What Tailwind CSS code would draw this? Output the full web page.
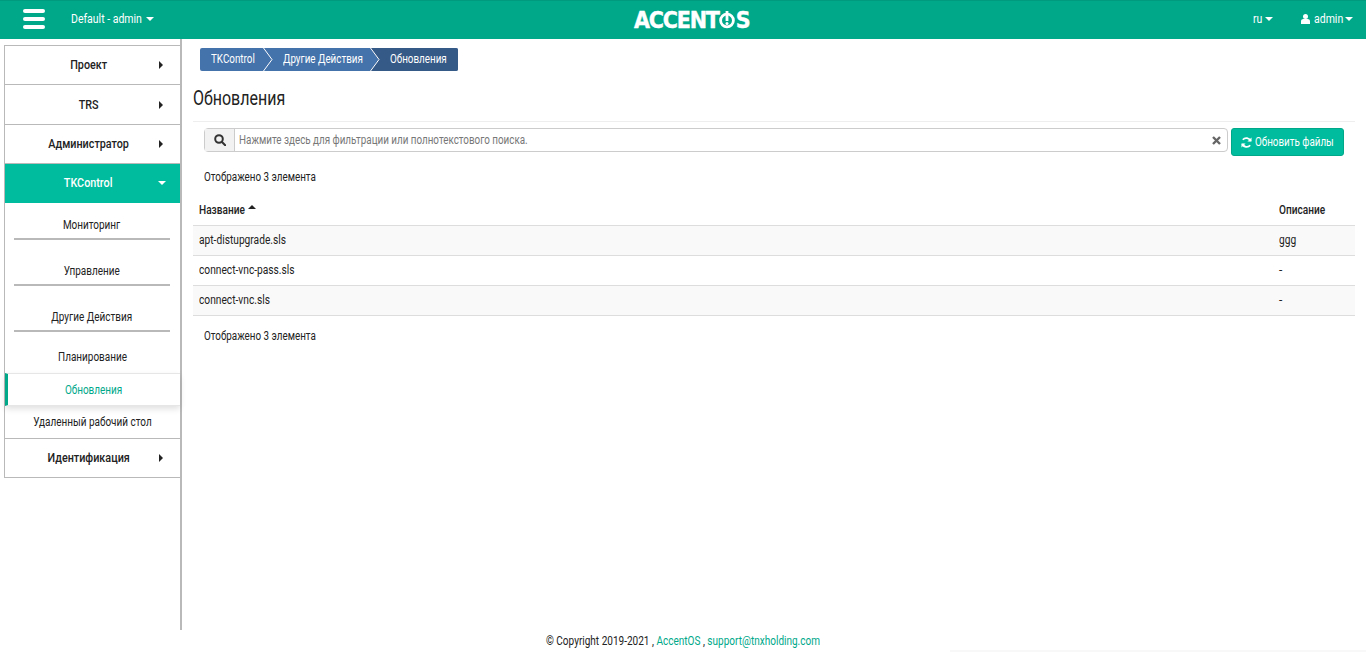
<!DOCTYPE html>
<html lang="ru">
  <head>
    <meta charset="UTF-8" />
    <meta name="viewport" content="width=device-width, initial-scale=1.0" />
    <title>Обновления</title>
    <script src="https://cdn.jsdelivr.net/npm/@tailwindcss/browser@4"></script>
  </head>
  <body class="bg-white font-['Roboto',sans-serif] text-[12px] text-[#222] h-[652px] overflow-hidden relative">
    <!-- top bar -->
    <header class="h-[39px] bg-[#00a88a] border-t border-[#009a7f] flex items-center text-white relative">
      <div class="w-[71px] pl-[23px] flex flex-col gap-[4px] -mt-[3px]">
        <span class="block w-[22px] h-[4px] rounded-sm bg-white"></span>
        <span class="block w-[22px] h-[4px] rounded-sm bg-white"></span>
        <span class="block w-[22px] h-[4px] rounded-sm bg-white"></span>
      </div>
      <div class="flex items-center gap-[4px] -mt-[2px]"><span class="w-[71px] whitespace-nowrap origin-left scale-x-[.875]">Default - admin</span><span class="w-0 h-0 border-x-[4px] border-x-transparent border-t-[4px] border-t-white"></span></div>
      <div class="absolute left-[634px] top-[6px] flex items-center font-['DejaVu_Sans_Condensed',sans-serif] font-bold text-[23px] tracking-[-1.2px] leading-[26px] [-webkit-text-stroke:0.4px_white]">
        ACCENT<svg width="16" height="18" viewBox="0 0 16 18" class="mx-[0.5px] shrink-0"><circle cx="8" cy="9.500" r="6.400" fill="none" stroke="white" stroke-width="2.800"/><rect x="6.600" y="0" width="2.800" height="10" fill="white"/><circle cx="8" cy="12.600" r="1.500" fill="white"/></svg>S
      </div>
      <div class="ml-auto flex items-center gap-[2px] -mt-[2px]"><span class="w-[10px] origin-left scale-x-[.875]">ru</span><span class="w-0 h-0 border-x-[4px] border-x-transparent border-t-[4px] border-t-white"></span></div>
      <div class="ml-[28px] mr-[13px] flex items-center gap-[4px] -mt-[2px]">
        <svg width="9" height="10" viewBox="0 0 9 10" fill="white"><circle cx="4.500" cy="2.600" r="2.500"/><path d="M0 10V7.200C0 5.800 1.200 5 2.400 5h4.200C7.800 5 9 5.800 9 7.200V10z"/></svg>
        <span class="w-[27px] origin-left scale-x-[.875]">admin</span><span class="w-0 h-0 border-x-[4px] border-x-transparent border-t-[4px] border-t-white"></span>
      </div>
    </header>

    <div class="flex h-[591px]">
      <!-- sidebar -->
      <aside class="w-[182px] shrink-0 pl-[4px] pt-[6px] border-r-2 border-[#b9b9b9]">
        <nav class="border-l border-b border-[#b9b9b9] text-center">
          <a class="flex h-[39px] items-center border-t border-[#b9b9b9] font-medium text-[13px] text-[#222]"><span class="flex-1 pl-[16px] whitespace-nowrap scale-x-[.83]">Проект</span><span class="w-0 h-0 mr-[17px] border-y-[4px] border-y-transparent border-l-[4px] border-l-[#222]"></span></a>
          <a class="flex h-[40px] items-center border-t border-[#b9b9b9] font-medium text-[13px] text-[#222]"><span class="flex-1 pl-[16px] whitespace-nowrap scale-x-[.83]">TRS</span><span class="w-0 h-0 mr-[17px] border-y-[4px] border-y-transparent border-l-[4px] border-l-[#222]"></span></a>
          <a class="flex h-[39px] items-center border-t border-[#b9b9b9] font-medium text-[13px] text-[#222]"><span class="flex-1 pl-[16px] whitespace-nowrap scale-x-[.83]">Администратор</span><span class="w-0 h-0 mr-[17px] border-y-[4px] border-y-transparent border-l-[4px] border-l-[#222]"></span></a>
          <a class="flex h-[40px] pb-[2px] items-center bg-[#00bc9e] border-t border-[#b9b9b9] font-medium text-[13px] text-white"><span class="flex-1 pl-[16px] whitespace-nowrap scale-x-[.83]">TKControl</span><span class="w-0 h-0 mr-[14px] border-x-[4px] border-x-transparent border-t-[4px] border-t-white"></span></a>
          <div class="h-[37px] pt-[15px] ml-[9px] mr-[10px] border-b-2 border-[#b9b9b9] leading-[14px]"><span class="inline-block scale-x-[.83]">Мониторинг</span></div>
          <div class="h-[46px] pt-[24px] ml-[9px] mr-[10px] border-b-2 border-[#b9b9b9] leading-[14px]"><span class="inline-block scale-x-[.83]">Управление</span></div>
          <div class="h-[46px] pt-[24px] ml-[9px] mr-[10px] border-b-2 border-[#b9b9b9] leading-[14px]"><span class="inline-block scale-x-[.83]">Другие Действия</span></div>
          <div class="h-[41px] pt-[18px] leading-[14px]"><span class="inline-block scale-x-[.83]">Планирование</span></div>
          <div class="h-[33px] flex items-center justify-center border-l-[3px] border-y border-l-[#00a88a] border-y-[#e6e6e6] shadow-[0_3px_6px_rgba(0,0,0,0.12)] text-[#00a88a] relative"><span class="inline-block scale-x-[.83]">Обновления</span></div>
          <div class="h-[32px] flex items-center justify-center"><span class="inline-block scale-x-[.83] whitespace-nowrap">Удаленный рабочий стол</span></div>
          <a class="flex h-[39px] items-center border-t border-[#b9b9b9] font-medium text-[13px] text-[#222]"><span class="flex-1 pl-[16px] whitespace-nowrap scale-x-[.83]">Идентификация</span><span class="w-0 h-0 mr-[17px] border-y-[4px] border-y-transparent border-l-[4px] border-l-[#222]"></span></a>
        </nav>
      </aside>

      <!-- content -->
      <main class="flex-1 pl-[11px] pr-[11px] pt-[9px]">
        <div class="ml-[7px] flex w-[258px] h-[23px] text-white rounded-[2px] overflow-hidden leading-[23px] bg-[#4472aa] whitespace-nowrap">
          <div class="w-[63px] pl-[11px] shrink-0"><span class="inline-block origin-left scale-x-[.82]">TKControl</span></div>
          <svg class="shrink-0" width="10" height="23" viewBox="0 0 10 23"><path d="M0.500 0L9 11.500L0.500 23" fill="none" stroke="white"/></svg>
          <div class="w-[97px] pl-[10px] shrink-0"><span class="inline-block origin-left scale-x-[.82]">Другие Действия</span></div>
          <svg class="shrink-0 bg-[#365a87]" width="10" height="23" viewBox="0 0 10 23"><path d="M0 0L8.500 11.500L0 23z" fill="#4472aa"/><path d="M0.500 0L9 11.500L0.500 23" fill="none" stroke="white"/></svg>
          <div class="flex-1 bg-[#365a87] pl-[10px]"><span class="inline-block origin-left scale-x-[.82]">Обновления</span></div>
        </div>
        <h1 class="mt-[15px] text-[20px] font-normal leading-[24px] text-[#222] origin-left scale-x-[.8]">Обновления</h1>
        <div class="mt-[11px] border-t border-[#eee] pt-[6px]">
          <div class="flex items-start">
            <div class="ml-[11px] w-[1024px] h-[24px] flex border border-[#ccc] rounded-[4px]">
              <div class="w-[30px] shrink-0 bg-[#f2f2f2] border-r border-[#ccc] flex items-center justify-center">
                <svg width="12" height="12" viewBox="0 0 12 12" fill="none" stroke="#333" stroke-width="2"><circle cx="5" cy="5" r="3.800"/><path d="M8 8l3.200 3.200" stroke-linecap="round"/></svg>
              </div>
              <div class="flex-1 pl-[5px] leading-[22px] text-[#777] origin-left scale-x-[.82] whitespace-nowrap">Нажмите здесь для фильтрации или полнотекстового поиска.</div>
              <svg class="mr-[6px] self-center shrink-0" width="9" height="9" viewBox="0 0 9 9" stroke="#666" stroke-width="2.400"><path d="M1 1l7 7M8 1l-7 7"/></svg>
            </div>
            <div class="ml-[3px] w-[113px] h-[28px] pl-[9px] bg-[#00bc9e] border border-[#00a88a] rounded-[3px] text-white flex items-center gap-[3px] whitespace-nowrap">
              <svg class="shrink-0" width="11" height="11" viewBox="0 0 12 12" fill="none" stroke="white" stroke-width="2"><path d="M10.500 4.500A5 5 0 0 0 2 3M1.500 7.500A5 5 0 0 0 10 9"/><path d="M11.500 0.500v4.500h-4.500zM0.500 11.500v-4.500h4.500z" fill="white" stroke="none"/></svg>
              <span class="w-[79px] shrink-0 origin-left scale-x-[.82]">Обновить файлы</span>
            </div>
          </div>
          <p class="mt-[13px] ml-[11px] leading-[16px] origin-left scale-x-[.82]">Отображено 3 элемента</p>
          <table class="mt-[10px] w-full border-collapse">
            <thead>
              <tr class="h-[30px]"><th class="pl-[6px] text-left font-medium"><span class="inline-flex items-center gap-[3px]"><span class="w-[46px] origin-left scale-x-[.84]">Название</span><span class="w-0 h-0 -mt-[6px] border-x-[4px] border-x-transparent border-b-[4px] border-b-[#222]"></span></span></th><th class="w-[76px] text-left font-medium"><span class="inline-block origin-left scale-x-[.84]">Описание</span></th></tr>
            </thead>
            <tbody>
              <tr class="h-[30px] bg-[#f9f9f9] border-y border-[#ddd]"><td class="pl-[6px]"><span class="inline-block origin-left scale-x-[.85]">apt-distupgrade.sls</span></td><td><span class="inline-block origin-left scale-x-[.85]">ggg</span></td></tr>
              <tr class="h-[30px] border-b border-[#ddd]"><td class="pl-[6px]"><span class="inline-block origin-left scale-x-[.85]">connect-vnc-pass.sls</span></td><td>-</td></tr>
              <tr class="h-[30px] bg-[#f9f9f9] border-b border-[#ddd]"><td class="pl-[6px]"><span class="inline-block origin-left scale-x-[.85]">connect-vnc.sls</span></td><td>-</td></tr>
            </tbody>
          </table>
          <p class="mt-[12px] ml-[11px] leading-[16px] origin-left scale-x-[.82]">Отображено 3 элемента</p>
        </div>
      </main>
    </div>

    <footer class="h-[22px] text-center leading-[22px] scale-x-[.835]">© Copyright 2019-2021 , <span class="text-[#00a88a]">AccentOS</span> , <span class="text-[#00a88a]">support@tnxholding.com</span></footer>
    <div class="absolute right-0 bottom-0 w-[416px] h-[2px] bg-[#f8f8f8]"></div>
  </body>
</html>
